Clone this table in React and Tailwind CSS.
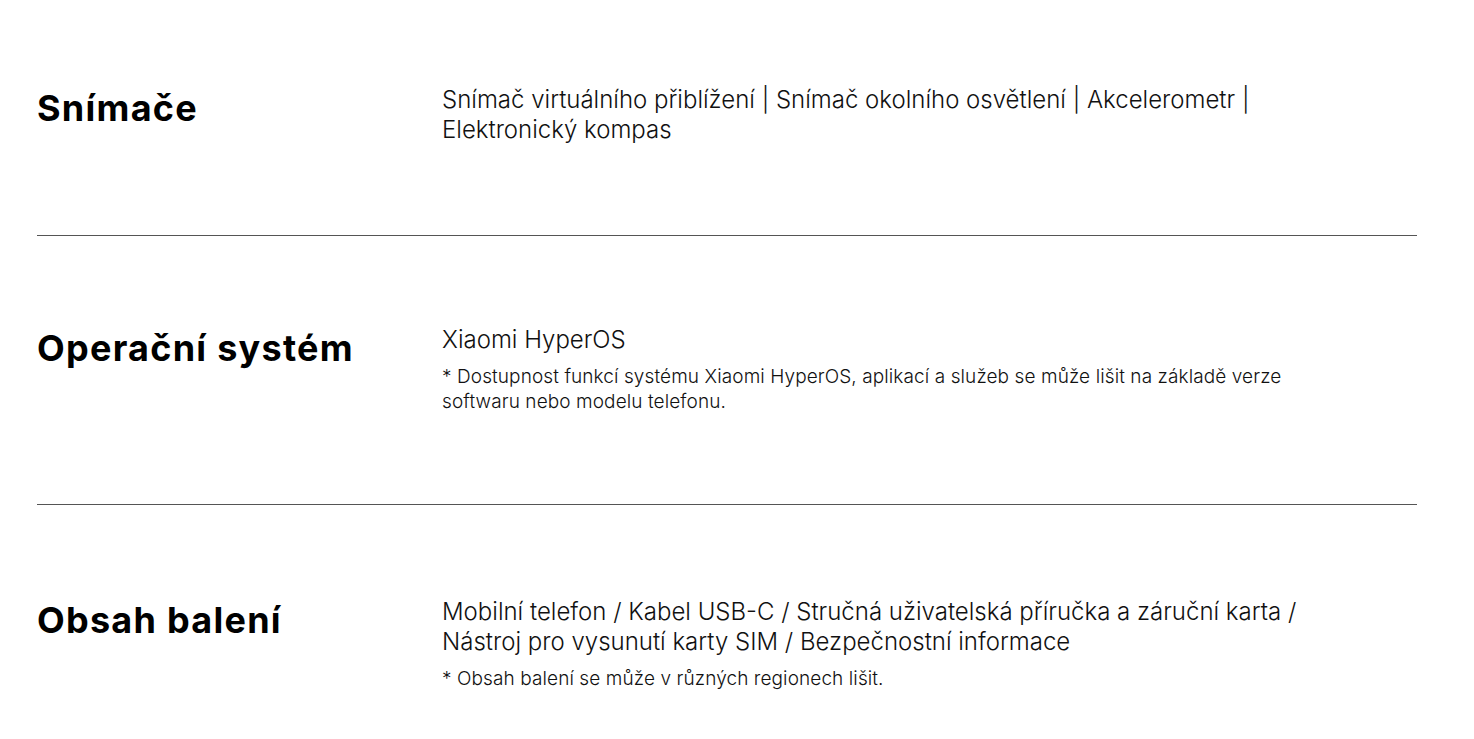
import React from "react";

const specs = [
    {
        title: "Snímače",
        pad: "pt-[85px] pb-[90px] border-b border-[#555]",
        lines: ["Snímač virtuálního přiblížení | Snímač okolního osvětlení | Akcelerometr | Elektronický kompas"],
        note: null,
    },
    {
        title: "Operační systém",
        pad: "pt-[89px] pb-[90px] border-b border-[#555]",
        lines: ["Xiaomi HyperOS"],
        note: "* Dostupnost funkcí systému Xiaomi HyperOS, aplikací a služeb se může lišit na základě verze softwaru nebo modelu telefonu.",
    },
    {
        title: "Obsah balení",
        pad: "pt-[92px] pb-[50px]",
        lines: ["Mobilní telefon / Kabel USB-C / Stručná uživatelská příručka a záruční karta / Nástroj pro vysunutí karty SIM / Bezpečnostní informace"],
        note: "* Obsah balení se může v různých regionech lišit.",
    },
];

const SpecRow = ({ spec }) => (
    <div className={`flex items-start ${spec.pad}`}>
        <h3 className="w-[405px] shrink-0 text-[36px] leading-[47px] font-bold text-black tracking-[0.035em]">
            {spec.title}
        </h3>
        <div className="w-[880px]">
            {spec.lines.map((line) => (
                <p key={line} className="text-[24px] leading-[30px] font-light text-[#111]">
                    {line}
                </p>
            ))}
            {spec.note && (
                <p className="mt-[9px] text-[19px] leading-[25px] font-light text-[#111] tracking-[0.005em]">
                    {spec.note}
                </p>
            )}
        </div>
    </div>
);

export default function App() {
    return (
        <div className="min-h-screen bg-white px-[37px] font-['Inter',sans-serif]">
            <div className="w-[1380px]">
                {specs.map((spec) => (
                    <SpecRow key={spec.title} spec={spec} />
                ))}
            </div>
        </div>
    );
}
